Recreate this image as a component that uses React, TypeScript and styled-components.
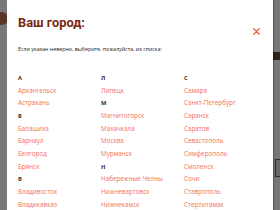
import React from "react";
import styled, { createGlobalStyle } from "styled-components";

const Global = createGlobalStyle`
  html, body { margin: 0; padding: 0; }
  body { width: 280px; height: 210px; overflow: hidden; background: #777; font-family: "Open Sans", "Liberation Sans", sans-serif; }
`;

const Screen = styled.div`
  position: relative;
  width: 280px;
  height: 210px;
  overflow: hidden;
  background: #787878;
`;

const Backdrop = styled.div`
  position: absolute;
  inset: 0;
  display: flex;
  padding-left: 7px;
`;

const Blob = styled.div`
  position: absolute;
  left: -4px;
  top: 12px;
  width: 12px;
  height: 13px;
  border-radius: 50%;
  background: #5b3626;
`;

const DarkBar = styled.div`
  position: absolute;
  right: 0;
  top: 52px;
  width: 8px;
  height: 8px;
  background: #2d2421;
`;

const Frame = styled.div`
  position: absolute;
  right: -4px;
  top: 159px;
  width: 7px;
  height: 16px;
  border: 1px solid #3a2a22;
  background: #6a6a6a;
`;

const Panel = styled.div`
  width: 266px;
  height: 230px;
  background: #fff;
  box-shadow: 1px 0 1px rgba(0,0,0,0.25);
  padding: 14px 13px 0 11px;
  box-sizing: border-box;
  z-index: 1;
`;

const Header = styled.div`
  display: flex;
  justify-content: space-between;
  align-items: flex-start;
`;

const Title = styled.h1`
  margin: 0;
  font-family: Roboto, "Open Sans", sans-serif;
  font-size: 12.8px;
  line-height: 17px;
  font-weight: 700;
  color: #7b2814;
`;

const Close = styled.button`
  margin-top: 14px;
  padding: 0;
  border: 0;
  background: none;
  width: 7px;
  height: 7px;
  display: flex;
`;

const Hint = styled.p`
  margin: 10px 0 0;
  font-size: 5.3px;
  line-height: 8px;
  color: #222;
`;

const Columns = styled.div`
  display: grid;
  grid-template-columns: 83px 83px 83px;
  margin-top: 19px;
`;

const Column = styled.div`
  display: flex;
  flex-direction: column;
`;

const Letter = styled.div`
  font-size: 5.8px;
  font-weight: 700;
  line-height: 12.65px;
  color: #3a2a24;
`;

const City = styled.a`
  font-size: 6.3px;
  line-height: 12.65px;
  color: #f27259;
  text-decoration: none;
  white-space: nowrap;
`;

type Entry = { letter?: string; city?: string };

const cols: Entry[][] = [
  [
    { letter: "А" },
    { city: "Архангельск" },
    { city: "Астрахань" },
    { letter: "Б" },
    { city: "Балашиха" },
    { city: "Барнаул" },
    { city: "Белгород" },
    { city: "Брянск" },
    { letter: "В" },
    { city: "Владивосток" },
    { city: "Владикавказ" },
  ],
  [
    { letter: "Л" },
    { city: "Липецк" },
    { letter: "М" },
    { city: "Магнитогорск" },
    { city: "Махачкала" },
    { city: "Москва" },
    { city: "Мурманск" },
    { letter: "Н" },
    { city: "Набережные Челны" },
    { city: "Нижневартовск" },
    { city: "Нижнекамск" },
  ],
  [
    { letter: "С" },
    { city: "Самара" },
    { city: "Санкт-Петербург" },
    { city: "Саранск" },
    { city: "Саратов" },
    { city: "Севастополь" },
    { city: "Симферополь" },
    { city: "Смоленск" },
    { city: "Сочи" },
    { city: "Ставрополь" },
    { city: "Стерлитамак" },
  ],
];

export default function App() {
  return (
    <>
      <Global />
      <Screen>
        <Blob />
        <DarkBar />
        <Frame />
        <Backdrop>
          <Panel>
            <Header>
              <Title>Ваш город:</Title>
              <Close aria-label="Закрыть">
                <svg width="7" height="7" viewBox="0 0 7 7">
                  <path d="M0.8 0.8 L6.2 6.2 M6.2 0.8 L0.8 6.2" stroke="#f15a3c" strokeWidth="1.3" strokeLinecap="round" />
                </svg>
              </Close>
            </Header>
            <Hint>Если указан неверно, выберите, пожалуйста, из списка:</Hint>
            <Columns>
              {cols.map((col, i) => (
                <Column key={i}>
                  {col.map((e, j) =>
                    e.letter ? <Letter key={j}>{e.letter}</Letter> : <City key={j} href="#">{e.city}</City>
                  )}
                </Column>
              ))}
            </Columns>
          </Panel>
        </Backdrop>
      </Screen>
    </>
  );
}
